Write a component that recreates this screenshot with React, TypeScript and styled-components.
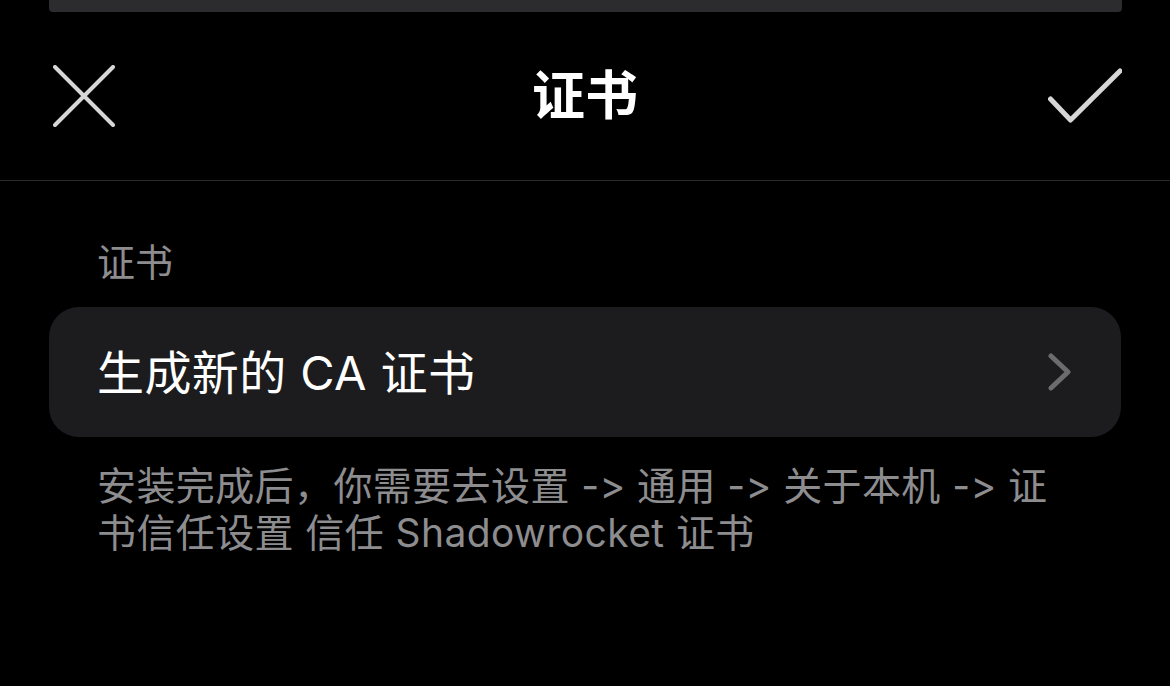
import React from "react";
import styled, { createGlobalStyle } from "styled-components";

const GlobalStyle = createGlobalStyle`
  html, body {
    margin: 0;
    padding: 0;
    background: #000;
  }
  body {
    font-family: Inter, "Noto Sans CJK SC", "Noto Sans", sans-serif;
    font-variant-ligatures: none;
    font-feature-settings: "calt" 0, "liga" 0;
    -webkit-font-smoothing: antialiased;
  }
`;

const Screen = styled.div`
  width: 1170px;
  height: 686px;
  background: #000;
  overflow: hidden;
  display: flex;
  flex-direction: column;
`;

const SheetBehind = styled.div`
  height: 12px;
  margin: 0 48px 0 49px;
  background: #2c2c2e;
  border-radius: 0 0 4px 4px;
  flex-shrink: 0;
`;

const NavBar = styled.header`
  height: 168px;
  display: flex;
  align-items: center;
  justify-content: space-between;
  padding: 0 48px 0 53px;
  border-bottom: 1px solid #2a2a2c;
  position: relative;
`;

const IconButton = styled.button`
  background: none;
  border: 0;
  padding: 0;
  display: flex;
  align-items: center;
  justify-content: center;
  color: #d6d6d6;
`;

const Title = styled.h1`
  position: absolute;
  left: 0;
  right: 0;
  text-align: center;
  margin: 0;
  font-size: 53px;
  font-weight: 700;
  color: #fff;
  pointer-events: none;
  line-height: 1;
`;

const Content = styled.main`
  padding: 62px 49px 0 49px;
  display: flex;
  flex-direction: column;
`;

const SectionLabel = styled.div`
  padding-left: 48px;
  font-size: 38px;
  line-height: 39px;
  color: #8d8d90;
  margin-bottom: 25px;
`;

const Card = styled.div`
  height: 130px;
  background: #1c1c1e;
  border-radius: 30px;
  display: flex;
  align-items: center;
  justify-content: space-between;
  padding: 0 48px;
`;

const RowText = styled.span`
  font-size: 47px;
  letter-spacing: 0.4px;
  color: #fff;
  line-height: 1;
`;

const Footer = styled.p`
  margin: 25px 0 0;
  padding-left: 48px;
  font-size: 39px;
  letter-spacing: 0.4px;
  line-height: 47px;
  color: #8d8d90;
  white-space: nowrap;
`;

const CloseIcon = () => (
  <svg width="62" height="62" viewBox="0 0 62 62" fill="none">
    <path d="M2 2L60 60M60 2L2 60" stroke="currentColor" strokeWidth="4" strokeLinecap="round" />
  </svg>
);

const CheckIcon = () => (
  <svg width="74" height="56" viewBox="0 0 74 56" fill="none">
    <path d="M2.5 31L22.5 52L72 3" stroke="currentColor" strokeWidth="5" strokeLinecap="round" strokeLinejoin="round" />
  </svg>
);

const Chevron = () => (
  <svg width="26" height="38" viewBox="0 0 26 38" fill="none">
    <path d="M4 3L21 19L4 35" stroke="#6c6c70" strokeWidth="5" strokeLinecap="round" strokeLinejoin="round" />
  </svg>
);

const App: React.FC = () => {
  return (
    <Screen>
      <GlobalStyle />
      <SheetBehind />
      <NavBar>
        <IconButton aria-label="关闭">
          <CloseIcon />
        </IconButton>
        <Title>证书</Title>
        <IconButton aria-label="完成">
          <CheckIcon />
        </IconButton>
      </NavBar>
      <Content>
        <SectionLabel>证书</SectionLabel>
        <Card>
          <RowText>生成新的 CA 证书</RowText>
          <Chevron />
        </Card>
        <Footer>
          安装完成后，你需要去设置 -&gt; 通用 -&gt; 关于本机 -&gt; 证
          <br />
          书信任设置 信任 Shadowrocket 证书
        </Footer>
      </Content>
    </Screen>
  );
};

export default App;
